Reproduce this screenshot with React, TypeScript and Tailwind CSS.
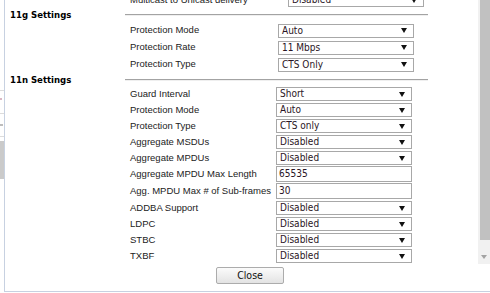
type Row = { label: string; value: string; kind: 'select' | 'input' };

const g11: Row[] = [
  { label: 'Protection Mode', value: 'Auto', kind: 'select' },
  { label: 'Protection Rate', value: '11 Mbps', kind: 'select' },
  { label: 'Protection Type', value: 'CTS Only', kind: 'select' },
];

const n11: Row[] = [
  { label: 'Guard Interval', value: 'Short', kind: 'select' },
  { label: 'Protection Mode', value: 'Auto', kind: 'select' },
  { label: 'Protection Type', value: 'CTS only', kind: 'select' },
  { label: 'Aggregate MSDUs', value: 'Disabled', kind: 'select' },
  { label: 'Aggregate MPDUs', value: 'Disabled', kind: 'select' },
  { label: 'Aggregate MPDU Max Length', value: '65535', kind: 'input' },
  { label: 'Agg. MPDU Max # of Sub-frames', value: '30', kind: 'input' },
  { label: 'ADDBA Support', value: 'Disabled', kind: 'select' },
  { label: 'LDPC', value: 'Disabled', kind: 'select' },
  { label: 'STBC', value: 'Disabled', kind: 'select' },
  { label: 'TXBF', value: 'Disabled', kind: 'select' },
];

const ctlFont = "font-['DejaVu_Sans_Condensed','DejaVu_Sans',sans-serif] [font-stretch:condensed] text-[10px] text-[#2a1424]";
const labelFont = "font-['Liberation_Sans',Arial,sans-serif] text-[9.5px] text-[#222]";

function Select({ value }: { value: string }) {
  return (
    <div className={`flex h-[14px] w-[136px] items-center justify-between border border-[#a8a8a8] bg-white pl-[3px] pr-[6px] leading-none ${ctlFont}`}>
      <span>{value}</span>
      <svg width="6" height="5" viewBox="0 0 6 5">
        <path d="M0 0h6L3 5z" fill="#111" />
      </svg>
    </div>
  );
}

function Input({ value }: { value: string }) {
  return (
    <div className={`flex h-[16px] w-[136px] items-center border border-[#a8a8a8] bg-white pl-[2px] leading-none ${ctlFont}`}>
      {value}
    </div>
  );
}

function FieldRow({ row, labelW }: { row: Row; labelW: string }) {
  if (row.kind === 'input') {
    return (
      <div className="flex h-[17px] items-start">
        <div className={`${labelW} flex h-[16px] items-center whitespace-nowrap ${labelFont}`}>{row.label}</div>
        <Input value={row.value} />
      </div>
    );
  }
  return (
    <div className="flex h-[16px] items-center">
      <div className={`${labelW} whitespace-nowrap ${labelFont}`}>{row.label}</div>
      <Select value={row.value} />
    </div>
  );
}

function SectionHead({ title, h }: { title: string; h: string }) {
  return (
    <div className={`flex ${h} items-center`}>
      <div className="w-[120px] pl-[5px] font-['DejaVu_Sans_Condensed','DejaVu_Sans',sans-serif] [font-stretch:condensed] text-[9.5px] font-bold leading-none text-black">
        {title}
      </div>
      <div className="w-[303px]">
        <div className="h-[1px] bg-[#a3a3a3]" />
        <div className="h-[1px] bg-[#efefef]" />
      </div>
    </div>
  );
}

function PageEdge() {
  return (
    <div className="flex w-[4px] flex-col bg-white">
      <div className="h-[90px]" />
      <div className="h-[1px] bg-[#dcdcdc]" />
      <div className="h-[7px]" />
      <div className="h-[2px] w-[2px] bg-[#d9b8c4]" />
      <div className="h-[13px]" />
      <div className="h-[1px] bg-[#dcdcdc]" />
      <div className="h-[10px]" />
      <div className="h-[2px] w-[3px] bg-[#bdbdbd]" />
      <div className="h-[10px]" />
      <div className="h-[1px] bg-[#dcdcdc]" />
      <div className="h-[4px]" />
      <div className="h-[38px] bg-[#cacaca]" />
    </div>
  );
}

function Scrollbar() {
  return (
    <div className="flex w-[12px] flex-col bg-[#f1f1f1]">
      <div className="ml-[2px] h-[240px] bg-[#c1c1c1]" />
      <div className="flex flex-1 items-end justify-center pb-[5px]">
        <svg width="6" height="4" viewBox="0 0 6 4">
          <path d="M0 0h6L3 4z" fill="#a3a3a3" />
        </svg>
      </div>
    </div>
  );
}

export default function App() {
  return (
    <div className="flex h-[293px] w-[490px] overflow-hidden bg-white">
      <PageEdge />
      <div className="flex h-[292px] flex-1 flex-col border-b border-l border-[#c7d1e1]">
        <div className="flex h-[264px]">
          <div className="flex-1 overflow-hidden">
            <div className="-mt-[8px]">
              <div className="flex h-[16px] items-center pl-[125px]">
                <div className={`w-[158px] whitespace-nowrap ${labelFont}`}>Multicast to Unicast delivery</div>
                <Select value="Disabled" />
              </div>

              <SectionHead title="11g Settings" h="h-[14px]" />
              <div className="pl-[125px]">
                {g11.map((r) => (
                  <div key={r.label} className="flex h-[17px] items-center">
                    <div className={`w-[148px] whitespace-nowrap ${labelFont}`}>{r.label}</div>
                    <Select value={r.value} />
                  </div>
                ))}
              </div>

              <SectionHead title="11n Settings" h="h-[13px]" />
              <div className="pl-[125px]">
                {n11.map((r) => (
                  <FieldRow key={r.label} row={r} labelW="w-[146px]" />
                ))}
              </div>
            </div>
          </div>
          <Scrollbar />
        </div>
        <div className="pl-[211px] pt-[3px]">
          <button className="flex h-[17px] w-[68px] items-center justify-center rounded-[2px] border border-[#acacac] bg-gradient-to-b from-[#fbfbfb] to-[#e3e3e3] font-['DejaVu_Sans_Condensed','DejaVu_Sans',sans-serif] [font-stretch:condensed] text-[10.5px] leading-none text-[#111]">
            Close
          </button>
        </div>
      </div>
    </div>
  );
}
